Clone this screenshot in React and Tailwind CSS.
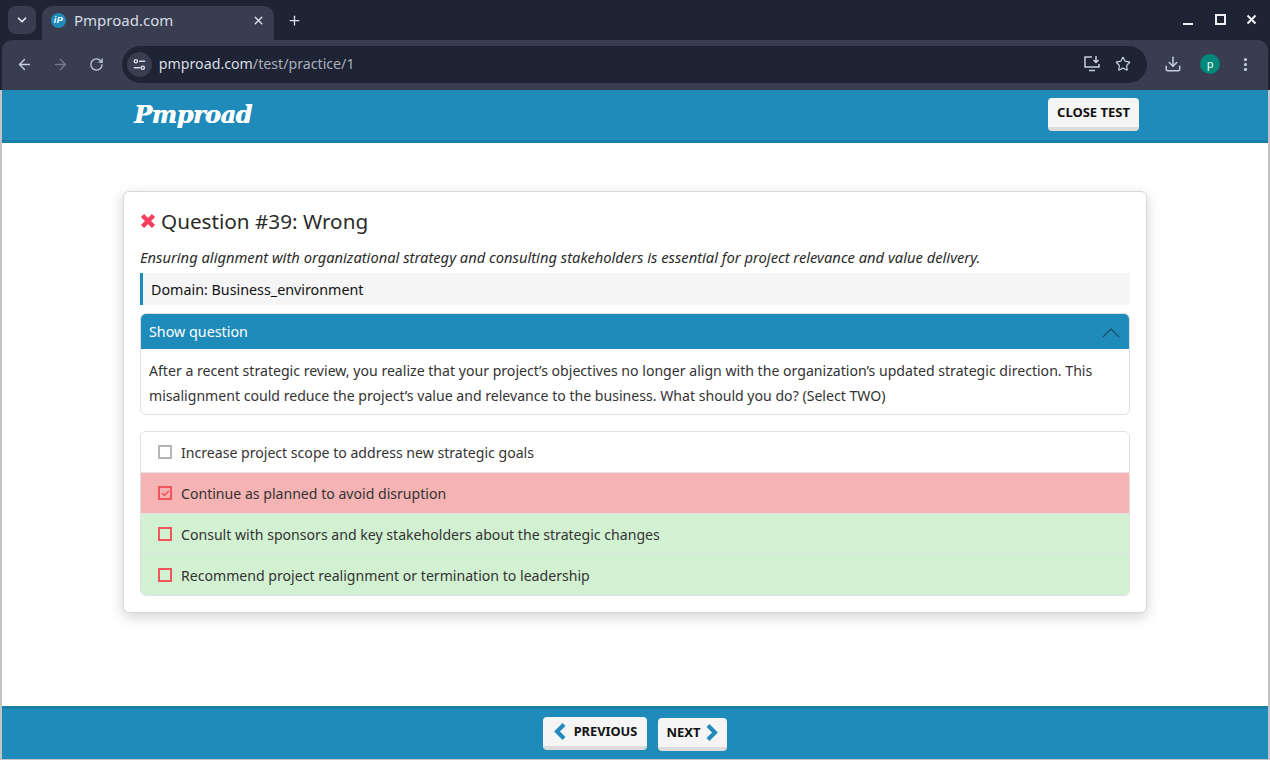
import React from "react";
import {
  ArrowLeft,
  ArrowRight,
  RotateCw,
  Star,
  Download,
  EllipsisVertical,
  ChevronDown,
  Plus,
  X,
  Check,
} from "lucide-react";

function SiteControls() {
  return (
    <svg width="13" height="13" viewBox="0 0 16 16" fill="none" stroke="#dfe3ee" strokeWidth="1.7">
      <circle cx="3.5" cy="4" r="2" />
      <path d="M7.5 4H15" />
      <circle cx="12" cy="12" r="2" />
      <path d="M1 12h8" />
    </svg>
  );
}

function InstallIcon() {
  return (
    <svg width="18" height="16" viewBox="0 0 18 16" fill="none" stroke="#c5cde0" strokeWidth="1.5">
      <path d="M9 1H2v10h14V8" />
      <path d="M6 14.5h6" />
      <path d="M13 0v6M10.5 4l2.5 2.5L15.500 4" />
    </svg>
  );
}

function WindowControls() {
  return (
    <svg width="74" height="12" viewBox="0 0 74 12" fill="none" stroke="#eef0f6" strokeWidth="2">
      <path d="M0 10h10" />
      <rect x="33" y="1" width="9" height="9" />
      <path d="M64.500 1.500l8 8M72.500 1.500l-8 8" />
    </svg>
  );
}

function Favicon() {
  return (
    <div className="w-[15px] h-[15px] rounded-full bg-[#1e8bbb] flex items-center justify-center text-white text-[9px] font-bold italic leading-none tracking-[0.5px] font-['Liberation_Sans',sans-serif]">
      iP
    </div>
  );
}

function Chevron({ left }) {
  return (
    <svg width="13" height="17" viewBox="0 0 13 17" fill="none" stroke="#1e8bbb" strokeWidth="4">
      <path d={left ? "M11 1.500L4 8.500l7 7" : "M2 1.500l7 7-7 7"} />
    </svg>
  );
}

function BrowserChrome() {
  return (
    <div className="bg-[#1e2433] font-['Noto_Sans',sans-serif] shrink-0">
      <div className="h-[40px] flex items-end pl-2 pr-[13px]">
        <div className="w-[28px] h-[28px] mb-[6px] rounded-lg bg-[#383e4f] flex items-center justify-center">
          <ChevronDown size={14} color="#e6e9f2" strokeWidth={3} />
        </div>
        <div className="ml-[6px] w-[232px] h-[34px] rounded-t-[10px] bg-[#383e4f] flex items-center pl-[9px] pr-[9px] pb-[6px]">
          <Favicon />
          <span className="ml-[8px] text-[15px] text-[#d7dbe6] flex-1">Pmproad.com</span>
          <X size={13} color="#dfe3ee" strokeWidth={2.5} />
        </div>
        <div className="ml-[13px] mb-[12px]">
          <Plus size={15} color="#dfe3ee" strokeWidth={2} />
        </div>
        <div className="ml-auto mb-[14px]">
          <WindowControls />
        </div>
      </div>
      <div className="h-[50px] mx-[2px] pb-[2px] bg-[#383e4f] rounded-t-[10px] flex items-center px-[14px]">
        <ArrowLeft size={17} color="#c5cde0" />
        <ArrowRight size={17} color="#737a8c" className="ml-[19px]" />
        <RotateCw size={15} color="#c5cde0" className="ml-[20px]" />
        <div className="ml-[18px] w-[1029px] h-[37px] rounded-full bg-[#1e2433] flex items-center pl-[5px] pr-[16px]">
          <div className="w-[25px] h-[25px] rounded-full bg-[#383e4f] flex items-center justify-center">
            <SiteControls />
          </div>
          <span className="ml-[7px] text-[14.200px] text-[#d7dbe6]">
            pmproad.com<span className="text-[#a8aebd]">/test/practice/1</span>
          </span>
          <div className="ml-auto flex items-center gap-[14px]">
            <InstallIcon />
            <Star size={16} color="#c5cde0" strokeWidth={1.8} />
          </div>
        </div>
        <Download size={18} color="#c5cde0" className="ml-[17px]" />
        <div className="ml-[18px] w-[20px] h-[20px] rounded-full bg-[#00897b] text-white text-[11px] flex items-center justify-center">
          p
        </div>
        <EllipsisVertical size={17} color="#c5cde0" strokeWidth={2.5} className="ml-[17px]" />
      </div>
    </div>
  );
}

function Option({ label, bg, boxColor, checked, last }) {
  return (
    <div className={`flex items-center pl-[17px] text-[14.100px] text-[#333] ${bg} ${last ? "h-[40px]" : "h-[41px] border-b border-[#e2e2e6]"}`}>
      <div className={`w-[14px] h-[14px] border-2 flex items-center justify-center ${boxColor}`}>
        {checked && <Check size={9} color="#f2545b" strokeWidth={4} />}
      </div>
      <span className="ml-[9px] pt-[1px]">{label}</span>
    </div>
  );
}

function TealButton({ children, className }) {
  return (
    <button className={`h-[33px] bg-[#f5f5f5] rounded-[4px] border-b-4 border-[#dcdcdc] font-bold text-[13px] text-[#111] flex items-center justify-center ${className}`}>
      {children}
    </button>
  );
}

export default function App() {
  return (
    <div className="h-[760px] w-[1270px] overflow-hidden flex flex-col bg-[#c4c4c4] font-['Noto_Sans',sans-serif]">
      <BrowserChrome />
      <div className="flex-1 flex flex-col mx-[2px] mb-[1px] min-h-0 bg-white">
        <header className="h-[53px] pb-[1px] shrink-0 bg-[#1e8bbb] border-b-[3px] border-[#1a7fa8] flex items-center justify-between pl-[132px] pr-[129px]">
          <span className="text-white text-[24px] font-bold italic font-['DejaVu_Serif',serif] leading-none tracking-[-0.5px] [text-shadow:0.5px_0_0_white]">Pmproad</span>
          <TealButton className="w-[91px]">CLOSE TEST</TealButton>
        </header>
        <main className="flex-1 pt-[48px] px-[121px] min-h-0">
          <div className="w-[1024px] h-[422px] bg-white border border-[#d8d8dc] rounded-[6px] shadow-[0_4px_14px_rgba(0,0,0,0.18)] px-[16px] pt-[13px]">
            <div className="flex items-center gap-[5px]">
              <svg width="16" height="16" viewBox="0 0 16 16" fill="none" stroke="#f73e5d" strokeWidth="4.500">
                <path d="M2.500 2.500l11 11M13.500 2.500l-11 11" />
              </svg>
              <h1 className="text-[20.700px] leading-[32px] text-[#2b2b2b]">Question #39: Wrong</h1>
            </div>
            <p className="mt-[8px] text-[14.720px] leading-[24px] italic text-[#2b2b2b]">
              Ensuring alignment with organizational strategy and consulting stakeholders is essential for project relevance and value delivery.
            </p>
            <div className="mt-[4px] h-[32px] pt-[1px] bg-[#f5f5f5] border-l-[3px] border-[#1e8bbb] pl-[8px] flex items-center text-[14.300px] text-[#111]">
              Domain: Business_environment
            </div>
            <div className="mt-[8px] border border-[#dedee3] rounded-[6px] overflow-hidden">
              <div className="h-[35px] bg-[#1e8bbb] flex items-center justify-between px-[8px] text-white text-[14.300px]">
                Show question
                <svg width="20" height="12" viewBox="0 0 20 12" fill="none" stroke="#1f4e66" strokeWidth="1.300">
                  <path d="M2 11l8-8 8 8" />
                </svg>
              </div>
              <div className="px-[8px] pt-[9px] pb-[6px] text-[14.100px] leading-[25px] text-[#333]">
                After a recent strategic review, you realize that your project’s objectives no longer align with the organization’s updated strategic direction. This misalignment could reduce the project’s value and relevance to the business. What should you do? (Select TWO)
              </div>
            </div>
            <div className="mt-[16px] border border-[#dedee3] rounded-[6px] overflow-hidden">
              <Option label="Increase project scope to address new strategic goals" bg="bg-white" boxColor="border-[#b5b5b5]" />
              <Option label="Continue as planned to avoid disruption" bg="bg-[#f5b3b3]" boxColor="border-[#f2545b]" checked />
              <Option label="Consult with sponsors and key stakeholders about the strategic changes" bg="bg-[#d2f1d2]" boxColor="border-[#f2545b]" />
              <Option label="Recommend project realignment or termination to leadership" bg="bg-[#d2f1d2]" boxColor="border-[#f2545b]" last />
            </div>
          </div>
        </main>
        <footer className="h-[53px] shrink-0 bg-[#1e8bbb] border-t-[3px] border-[#1a7fa8] flex items-start justify-center gap-[11px] pt-[8px]">
          <TealButton className="w-[104px]">
            <Chevron left />
            <span className="ml-[8px] text-[12.800px]">PREVIOUS</span>
          </TealButton>
          <TealButton className="w-[69px] mt-[1px]">
            NEXT
            <span className="ml-[5px]">
              <Chevron />
            </span>
          </TealButton>
        </footer>
      </div>
    </div>
  );
}
